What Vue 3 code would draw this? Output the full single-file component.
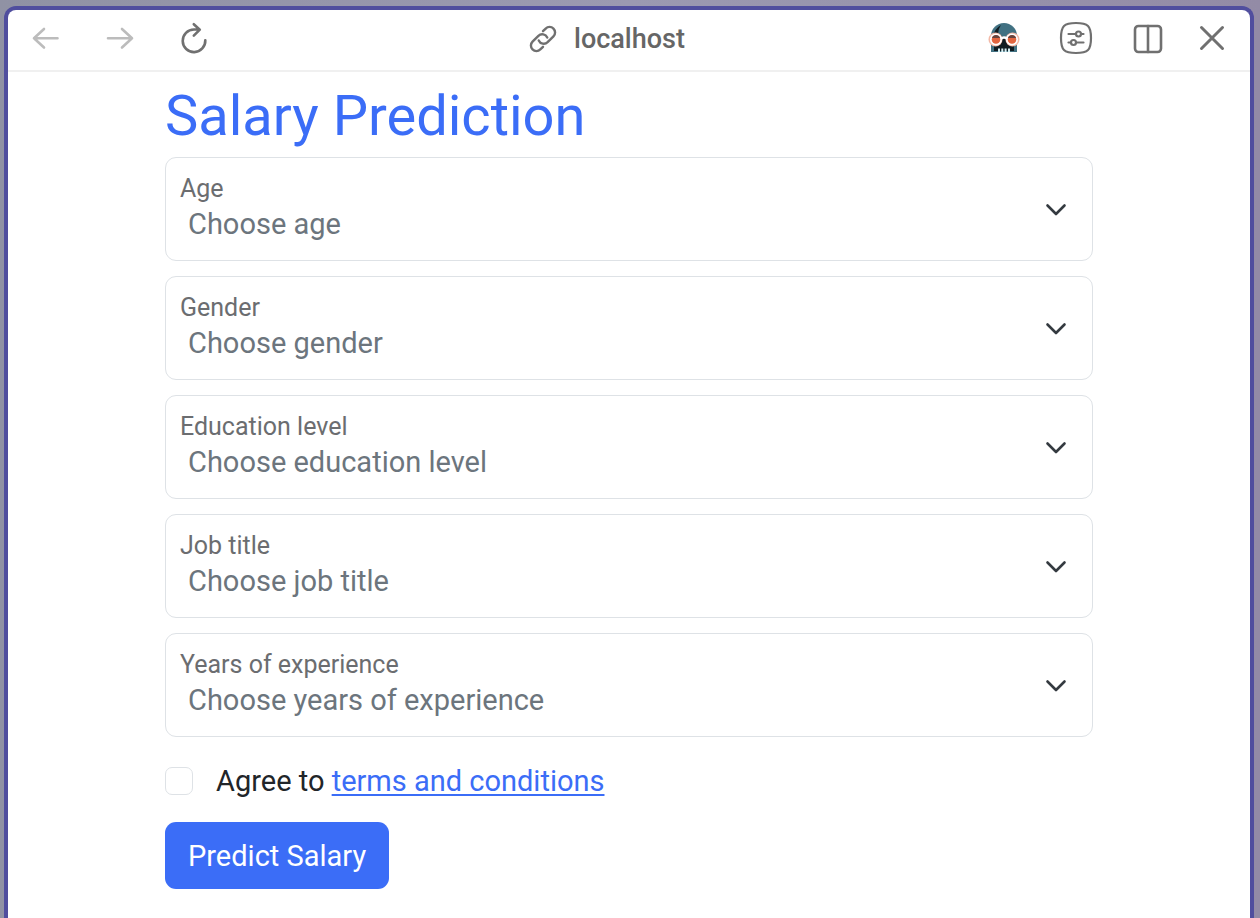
<script setup>
import { reactive, ref } from 'vue'

const fields = [
  { id: 'age', label: 'Age', placeholder: 'Choose age', options: ['18–25', '26–35', '36–50', '51+'] },
  { id: 'gender', label: 'Gender', placeholder: 'Choose gender', options: ['Female', 'Male', 'Other'] },
  { id: 'education', label: 'Education level', placeholder: 'Choose education level', options: ["Bachelor's", "Master's", 'PhD'] },
  { id: 'job', label: 'Job title', placeholder: 'Choose job title', options: ['Data Analyst', 'Software Engineer', 'Product Manager'] },
  { id: 'experience', label: 'Years of experience', placeholder: 'Choose years of experience', options: ['0–2', '3–5', '6–10', '11+'] },
]
const form = reactive({ age: '', gender: '', education: '', job: '', experience: '' })
const agreed = ref(false)
</script>

<template>
  <div class="desktop">
    <div class="window">
      <header class="toolbar">
        <nav class="group nav" aria-label="History">
          <button type="button" class="icon faded" aria-label="Back">
            <svg width="32" height="32" viewBox="0 0 32 32"><path d="M27.500 16.300H4M14 7L4 16.300l10 9.200" /></svg>
          </button>
          <button type="button" class="icon faded" aria-label="Forward">
            <svg width="32" height="32" viewBox="0 0 32 32"><path d="M4 16.300h24M18 7l10 9.300-10 9.200" /></svg>
          </button>
          <button type="button" class="icon" aria-label="Reload">
            <svg width="32" height="32" viewBox="0 0 32 32"><path d="M27.300 18.300A11.300 11.300 0 1 1 16 7.500h5.500M15.800 2.200l6 5.500-6 6" /></svg>
          </button>
        </nav>
        <div class="address">
          <svg width="28" height="28" viewBox="0 0 28 28" aria-hidden="true">
            <g transform="rotate(-45 14 14)">
              <path d="M8.500 19.500H4.700a5.500 5.500 0 0 1 0-11H13a5.500 5.500 0 0 1 5 7.500" />
              <path d="M19.500 8.500h3.800a5.500 5.500 0 0 1 0 11H15a5.500 5.500 0 0 1-5-7.500" />
            </g>
          </svg>
          <span>localhost</span>
        </div>
        <div class="group tools">
          <button type="button" class="icon" aria-label="Profile">
            <svg class="avatar" width="32" height="32" viewBox="0 0 32 32">
              <path d="M3 30V14a13 13 0 0 1 26 0v16z" fill="#417182" />
              <path d="M5 29V15Q6 7 13 3q-3 4-3 9l6 3 12 1v13z" fill="#101c22" />
              <path d="M3 20h3v10H3zM26 21h3v9h-3z" fill="#417182" />
              <circle cx="7.500" cy="17.500" r="7" fill="#f3b9a7" />
              <circle cx="24.500" cy="17.500" r="7" fill="#f3b9a7" />
              <circle cx="8" cy="17.500" r="6" fill="#fff" />
              <circle cx="24" cy="17.500" r="6" fill="#fff" />
              <path d="M13 16.500q3-2 6 0" fill="none" stroke="#fff" stroke-width="2.500" />
              <circle cx="8" cy="17.500" r="4.300" fill="#e2653f" />
              <circle cx="24" cy="17.500" r="4.300" fill="#e2653f" />
              <path d="M3.900 16a4.300 4.300 0 0 1 8.200 0zM19.900 16a4.300 4.300 0 0 1 8.200 0z" fill="#67433d" />
              <path d="M11 26.500v3.500M14.300 26.500v3.500M17.600 26.500v3.500M21 26.500v3.500" stroke="#d7f1f5" stroke-width="2" />
            </svg>
          </button>
          <button type="button" class="icon" aria-label="Site settings">
            <svg class="thin" width="34" height="34" viewBox="0 0 34 34">
              <path d="M17 2C29 2 32 5 32 17S29 32 17 32 2 29 2 17 5 2 17 2z" />
              <path d="M9.500 13h7M22.500 13h2M9.500 21.500h2M17.500 21.500h7" />
              <circle cx="19.500" cy="13" r="2.500" /><circle cx="14.500" cy="21.500" r="2.500" />
            </svg>
          </button>
          <button type="button" class="icon" aria-label="Split view">
            <svg width="32" height="32" viewBox="0 0 32 32"><rect x="3" y="4" width="26" height="26" rx="3.500" /><path d="M16 4v26" /></svg>
          </button>
          <button type="button" class="icon" aria-label="Close">
            <svg class="bold" width="32" height="32" viewBox="0 0 32 32"><path d="M5.500 5.500l21 21M26.500 5.500l-21 21" /></svg>
          </button>
        </div>
      </header>

      <main class="page">
        <h1>Salary Prediction</h1>
        <form @submit.prevent>
          <div v-for="field in fields" :key="field.id" class="field">
            <select :id="field.id" v-model="form[field.id]">
              <option value="">{{ field.placeholder }}</option>
              <option v-for="option in field.options" :key="option" :value="option">{{ option }}</option>
            </select>
            <label :for="field.id">{{ field.label }}</label>
            <svg class="chevron" width="24" height="24" viewBox="0 0 24 24" aria-hidden="true"><path d="M3.500 8.500l8.500 8.500 8.500-8.500" /></svg>
          </div>
          <div class="terms">
            <input id="agree" v-model="agreed" type="checkbox" />
            <label for="agree">Agree to <a href="#terms">terms and conditions</a></label>
          </div>
          <button type="submit" class="submit">Predict Salary</button>
        </form>
      </main>
    </div>
  </div>
</template>

<style>
body {
  margin: 0;
}
</style>

<style scoped>
* {
  box-sizing: border-box;
}
.desktop {
  min-height: 100vh;
  display: flex;
  padding: 6px 6px 0 4px;
  background: linear-gradient(90deg, #9092a4, #9b99b1 50%, #938ba6);
  font-family: Roboto, "Liberation Sans", sans-serif;
  color: #212529;
}
.window {
  flex: 1;
  min-width: 0;
  border: 4px solid #504e9e;
  border-bottom: 0;
  border-radius: 12px 12px 0 0;
  background: #fff;
}
.toolbar {
  display: grid;
  grid-template-columns: 1fr auto 1fr;
  align-items: center;
  height: 62px;
  padding: 0 22px 4px;
  border-bottom: 2px solid #f0f0f0;
}
.group {
  display: flex;
  align-items: center;
}
.nav {
  gap: 42px;
}
.tools {
  justify-content: flex-end;
  gap: 40px;
}
.icon {
  display: flex;
  justify-content: center;
  width: 32px;
  padding: 0;
  border: 0;
  background: none;
}
.tools .icon:last-child {
  margin-left: -8px;
}
.icon svg,
.address svg {
  flex: none;
  fill: none;
  stroke: #707070;
  stroke-width: 2.600;
  stroke-linecap: round;
  stroke-linejoin: round;
}
.icon.faded svg {
  stroke: #bcbcbc;
}
.icon .thin {
  stroke-width: 2.200;
}
.icon .bold {
  stroke-width: 3;
}
.icon .avatar {
  stroke: none;
  stroke-linecap: butt;
}
.address {
  display: flex;
  align-items: center;
  gap: 17px;
  padding: 2px 44px 0 0;
  font-size: 27px;
  font-weight: 500;
  line-height: 32px;
  color: #666;
}
.address svg {
  stroke-width: 2.400;
}
.page {
  max-width: 928px;
  margin: 0 auto;
  padding-top: 10px;
}
h1 {
  margin: 0 0 7px;
  font-size: 56px;
  font-weight: 400;
  line-height: 68px;
  color: #3b6df7;
}
form {
  display: flex;
  flex-direction: column;
  gap: 15px;
}
.field {
  display: grid;
  align-items: center;
}
.field > * {
  grid-area: 1 / 1;
}
select {
  appearance: none;
  width: 100%;
  height: 104px;
  padding: 45px 60px 15px 22px;
  border: 1px solid #dee2e6;
  border-radius: 11px;
  background: #fff;
  font: 400 29px/42px Roboto, "Liberation Sans", sans-serif;
  color: #6c757d;
}
.field label {
  align-self: start;
  justify-self: start;
  padding: 16px 0 0 15px;
  font-size: 25px;
  line-height: 32px;
  color: #6b6d70;
  pointer-events: none;
}
.chevron {
  justify-self: end;
  margin-right: 25px;
  fill: none;
  stroke: #343a40;
  stroke-width: 2.600;
  stroke-linecap: round;
  stroke-linejoin: round;
  pointer-events: none;
}
.terms {
  display: flex;
  align-items: center;
  gap: 23px;
  padding-top: 7px;
  font-size: 29px;
  line-height: 44px;
}
.terms input {
  appearance: none;
  width: 28px;
  height: 28px;
  margin: 0;
  border: 1px solid #dee2e6;
  border-radius: 7px;
  background: #fff;
}
.terms input:checked {
  border-color: #3b6df7;
  background: #3b6df7;
}
a {
  color: #3b6df7;
  text-decoration-thickness: 2px;
  text-underline-offset: 3px;
}
.submit {
  align-self: flex-start;
  height: 67px;
  margin-top: 4px;
  padding: 0 23px;
  border: 0;
  border-radius: 11px;
  background: #3b6df7;
  font: 400 29px/44px Roboto, "Liberation Sans", sans-serif;
  color: #fff;
}
</style>
